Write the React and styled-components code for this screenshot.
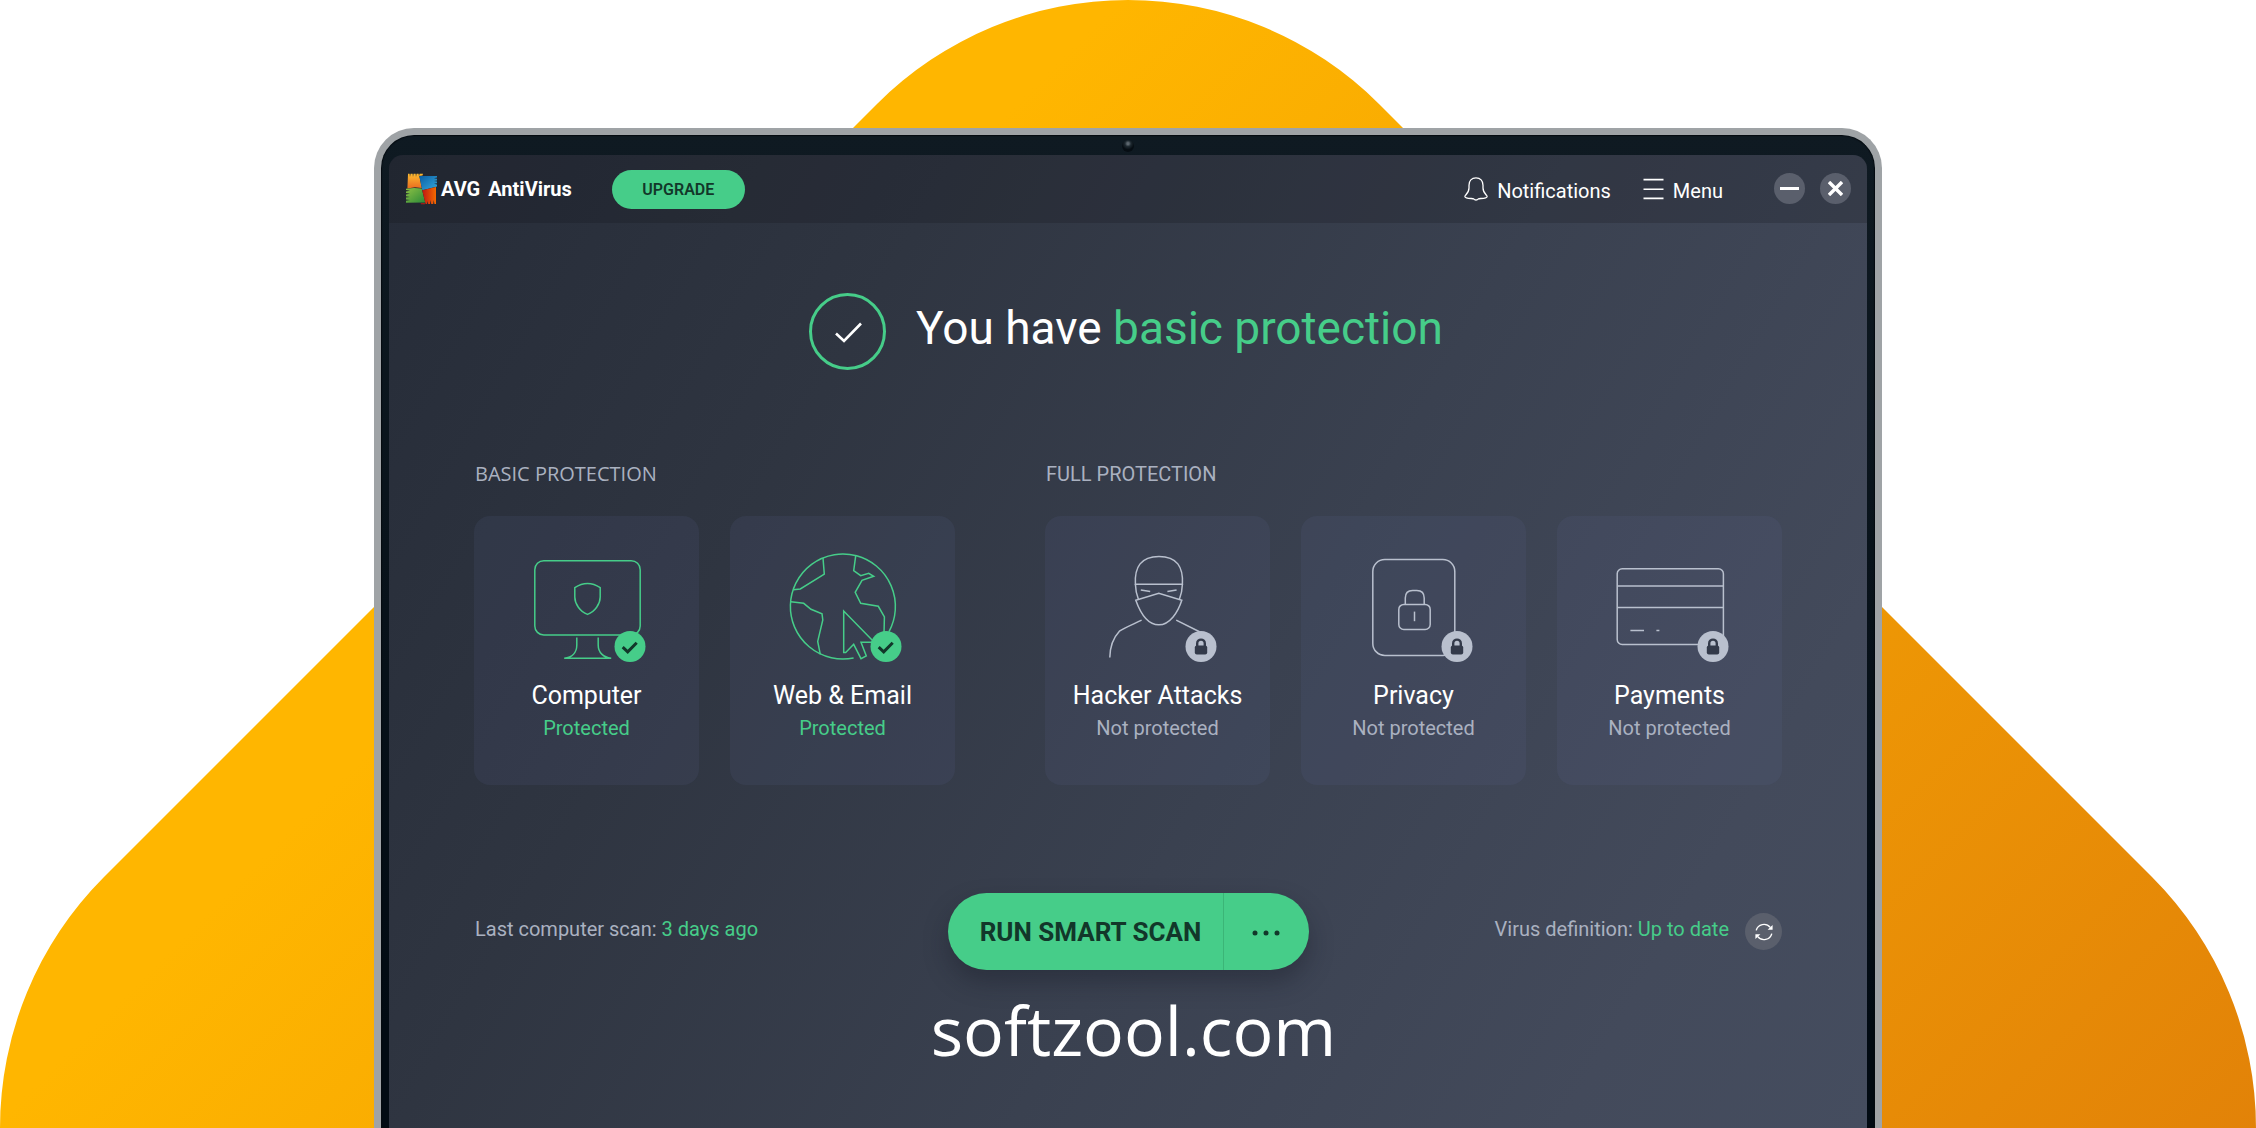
import styled, { createGlobalStyle, css } from "styled-components";

const GlobalStyle = createGlobalStyle`
  :root {
    --green: #46cd89;
    --dark-green: #12372a;
    --grey-text: #aab1c0;
    --badge-grey: #b9c0ce;
  }

  * {
    box-sizing: border-box;
  }

  body {
    margin: 0;
    background: #fff;
    font-family: Roboto, "Liberation Sans", sans-serif;
    color: #fff;
  }

  button {
    border: none;
    padding: 0;
    font-family: inherit;
    color: inherit;
    background: none;
    cursor: pointer;
  }
`;

const Page = styled.div`
  display: grid;
  min-height: 100vh;
  overflow: hidden;
`;

const Backdrop = styled.svg`
  grid-area: 1 / 1;
  display: block;
  width: 100%;
`;

const Laptop = styled.div`
  grid-area: 1 / 1;
  z-index: 1;
  justify-self: center;
  display: flex;
  flex-direction: column;
  width: 90%;
  max-width: 1508px;
  margin-top: 128px;
  border: 7px solid #9fa3a6;
  border-bottom: none;
  border-radius: 40px 40px 0 0;
  background: linear-gradient(#0f1a22, #020b13 90%);
  box-shadow: inset 0 0 1px 1px #050b10;
`;

const Bezel = styled.div`
  display: flex;
  justify-content: center;
  align-items: center;
  height: 20px;
  padding-top: 2px;
`;

const Camera = styled.span`
  width: 12px;
  height: 12px;
  border-radius: 50%;
  background: radial-gradient(circle at 50% 30%, #5c666e 0 1px, #1e2930 3px, #060d13 6px);
`;

const Screen = styled.div`
  flex: 1;
  margin: 0 8px;
  border-radius: 14px 14px 0 0;
  overflow: hidden;
  background: linear-gradient(120deg, #262c38 0%, #2f3541 28%, #3a4150 58%, #434a5b 85%, #454d5f 100%);
`;

const TopBar = styled.header`
  display: flex;
  align-items: center;
  height: 68px;
  padding: 0 16px;
  background: rgba(16, 14, 20, 0.2);
`;

const Brand = styled.div`
  display: flex;
  align-items: center;
  margin-left: 1px;
  font-size: 20px;
  font-weight: 700;
  line-height: 24px;
`;

const BrandName = styled.span`
  margin: 0 8px 0 2px;
`;

const UpgradeButton = styled.button`
  width: 133px;
  height: 39px;
  margin-left: 40px;
  border-radius: 20px;
  background: var(--green);
  color: var(--dark-green);
  font-size: 16px;
  font-weight: 600;
`;

const TopActions = styled.nav`
  display: flex;
  align-items: center;
  margin-left: auto;
`;

const TopLink = styled.button`
  display: flex;
  align-items: center;
  gap: 9px;
  margin-right: 32px;
  font-size: 20px;
  line-height: 24px;

  span {
    padding-top: 4px;
  }
`;

const WindowButtons = styled.div`
  display: flex;
  gap: 15px;
  margin-left: 19px;
  padding-bottom: 2px;
`;

const RoundButton = styled.button`
  display: flex;
  justify-content: center;
  align-items: center;
  width: ${(props) => props.$size}px;
  height: ${(props) => props.$size}px;
  border-radius: 50%;
  background: #5a5f6c;
`;

const Content = styled.main`
  display: flex;
  flex-direction: column;
  padding: 70px 85px 0;
`;

const Status = styled.div`
  display: flex;
  justify-content: center;
  align-items: center;
  gap: 30px;
`;

const StatusTitle = styled.h1`
  margin: 0;
  padding: 0 4px 8px 0;
  font-size: 46px;
  font-weight: 400;
  line-height: 56px;
`;

const Green = styled.span`
  color: var(--green);
`;

const Groups = styled.div`
  display: flex;
  justify-content: space-between;
  margin-top: 92px;
`;

const GroupTitle = styled.h2`
  margin: 0 0 30px 1px;
  color: var(--grey-text);
  font-size: 20px;
  font-weight: 400;
  line-height: 24px;
  ${(props) =>
    props.$humanist &&
    css`
      font-family: "Open Sans", "Noto Sans", sans-serif;
    `}
`;

const Cards = styled.div`
  display: flex;
  gap: 31px;
`;

const Card = styled.article`
  display: flex;
  flex-direction: column;
  align-items: center;
  width: 225px;
  padding: 30px 0 45px;
  border-radius: 16px;
  background: rgba(100, 108, 155, 0.12);
`;

const CardIcon = styled.svg`
  width: 120px;
  height: 120px;
  fill: none;
  stroke: ${(props) => (props.$safe ? "var(--green)" : "var(--badge-grey)")};
  stroke-width: 1.5;
`;

const CardTitle = styled.h3`
  margin: 14px 0 4px;
  font-size: 25px;
  font-weight: 400;
  line-height: 32px;
`;

const CardState = styled.p`
  margin: 0;
  color: ${(props) => (props.$safe ? "var(--green)" : "var(--grey-text)")};
  font-size: 20px;
  line-height: 24px;
`;

const ScanRow = styled.div`
  display: grid;
  grid-template-columns: 1fr auto 1fr;
  align-items: center;
  margin-top: 108px;
`;

const Info = styled.p`
  margin: 0 0 0 1px;
  padding-bottom: 6px;
  color: var(--grey-text);
  font-size: 20px;
  line-height: 24px;
`;

const Definition = styled.div`
  display: flex;
  justify-content: flex-end;
  align-items: center;
  gap: 16px;
`;

const ScanButtons = styled.div`
  display: flex;
  height: 77px;
  border-radius: 39px;
  overflow: hidden;
  background: var(--green);
  color: var(--dark-green);
  box-shadow: 0 12px 24px rgba(20, 22, 34, 0.35);
`;

const ScanButton = styled.button`
  width: 275px;
  padding-left: 11px;
  font-size: 26px;
  font-weight: 700;
`;

const MoreButton = styled.button`
  width: 86px;
  border-left: 1px solid #3bb577;
`;

const Site = styled.p`
  margin: 20px 0 0 11px;
  font-family: "Open Sans", "Noto Sans", sans-serif;
  font-size: 68px;
  line-height: 80px;
  text-align: center;
`;

function Logo() {
  return (
    <svg width="33" height="33" viewBox="0 0 33 33" aria-hidden="true">
      <defs>
        <linearGradient id="logoOrange" x1="0" y1="0" x2="0" y2="1">
          <stop offset="0" stopColor="#fdbb30" />
          <stop offset="1" stopColor="#ea6c20" />
        </linearGradient>
        <linearGradient id="logoBlue" x1="0" y1="0" x2="1" y2="1">
          <stop offset="0" stopColor="#0a5fa5" />
          <stop offset="1" stopColor="#35a7da" />
        </linearGradient>
        <linearGradient id="logoGreen" x1="0" y1="0" x2="1" y2="1">
          <stop offset="0" stopColor="#8cc044" />
          <stop offset="1" stopColor="#2b8a38" />
        </linearGradient>
        <linearGradient id="logoRed" x1="0" y1="0" x2="1" y2="0">
          <stop offset="0" stopColor="#b80d14" />
          <stop offset="1" stopColor="#f56a00" />
        </linearGradient>
      </defs>
      <path
        fill="url(#logoOrange)"
        d="M2 .7H3.6L4 4 4.6 .7H6.6L7 4 7.6 .7H9.6L10 4 10.6 .7H12.6L13 3.4 13.6 .7H17L16.5 2.6 13.3 3 15.8 15 9 14.2 1.4 15.4Z"
      />
      <path
        fill="url(#logoBlue)"
        d="M13.3 3H31V4.6L28 5.2 31 5.8V7.4L28 8 31 8.6V10.2L28 10.8 31 11.4V13.6L16.3 17.3Z"
      />
      <path
        fill="url(#logoGreen)"
        d="M0 15.8 8 15 15.7 15.4 19.2 29.4 0 29.7V27.8L4 27 0 26.4V24.6L4 24 0 23.2V21.4L4 20.8 0 20V18.4L4 17.8 0 17Z"
      />
      <path
        fill="url(#logoRed)"
        d="M16.3 17.3 30 14V31H28.4L27.8 27 27.2 31H25.2L24.6 27 24 31H22.2L21.6 28 21 31H19.6L19.2 29.4ZM14.6 30.2H19L18.6 31.2H15Z"
      />
    </svg>
  );
}

function SafeBadge() {
  return (
    <g stroke="none">
      <circle cx="103" cy="100.5" r="15.5" fill="#46cd89" />
      <path
        d="M95.7 101.2 100.7 105.8 109.7 96.8"
        fill="none"
        stroke="#12372a"
        strokeWidth="3"
      />
    </g>
  );
}

function LockBadge() {
  return (
    <g stroke="none">
      <circle cx="103" cy="100.5" r="15.5" fill="#b9c0ce" />
      <rect x="96.8" y="99.4" width="12.4" height="9" rx="2" fill="#333a4a" />
      <path
        d="M99.2 101V97.4a3.8 3.8 0 0 1 7.6 0V101"
        fill="none"
        stroke="#333a4a"
        strokeWidth="2.4"
      />
    </g>
  );
}

function ComputerDrawing() {
  return (
    <>
      <rect x="7.8" y="14.7" width="105.4" height="74.3" rx="9" />
      <path d="M47.8 41.6Q54 37.4 60.5 37.4T73.2 41.6V51C73.2 58 68 65.6 60.5 68.4 53 65.6 47.8 58 47.8 51Z" />
      <path d="M49.8 91.6V99C49.8 106.6 45 111.4 37.2 112.2H84.2C76.4 111.4 71.2 106.6 71.2 99V91.6" />
    </>
  );
}

function GlobeDrawing() {
  return (
    <>
      <path d="M70.6 111.9A52.5 52.5 0 1 1 106 85.6" />
      <path d="M40 12 41.3 28.2 17.3 43 10.3 43.8" />
      <path d="M7.8 55.8 20.7 57.3 28 63.3 39 67.7 39.8 74 34.7 95.4 37.3 108.4" />
      <path d="M72.7 9.8 70.7 24.7 77.7 29.7 85.7 27.3 90.7 30.3 79 34.3 72.2 46.3 77.7 57.3 95.3 60.3 101.4 71 101 88" />
      <path d="M92 97 60.7 65V106.6H62.7L70.7 98.3 78 112.7 83.3 110 78 96.2H92" />
    </>
  );
}

function HackerDrawing() {
  return (
    <>
      <path d="M37.4 38.2C36.4 21 43 10.4 61 10.4S85.4 21 84.4 38.2Z" />
      <path d="M37.4 38.2Q37.6 46 40.4 53.2M84.4 38.2Q84.2 46 81.4 53.2" />
      <path d="M37.8 54.2 60.8 47.4 83.8 54.2C80 66 72 78.8 60.8 78.8S42 66 37.8 54.2Z" />
      <path d="M42.8 44 52.2 45.6M78.6 44 69.4 45.6" />
      <path d="M43.6 74.2C36 78 28.6 80.6 21.4 85.2 15 92 12 100 11.8 111.6" />
      <path d="M78.2 74.2 102 86" />
    </>
  );
}

function PrivacyDrawing() {
  return (
    <>
      <rect x="18.8" y="13.4" width="82" height="96" rx="12" />
      <rect x="44.8" y="58.4" width="31.4" height="25" rx="5" />
      <path d="M51.3 58.4V52C51.3 47 54 44.4 58.6 44.4H62.8C67.4 44.4 70.2 47 70.2 52V58.4" />
      <path d="M60.5 65.6V75.2" />
    </>
  );
}

function PaymentsDrawing() {
  return (
    <>
      <rect x="7.2" y="22.8" width="106.2" height="75.6" rx="5" />
      <path d="M7.2 40H113.4M7.2 61.4H113.4M20.4 84.4H34M46.4 84.4H49.4" />
    </>
  );
}

const basicCards = [
  { title: "Computer", Drawing: ComputerDrawing },
  { title: "Web & Email", Drawing: GlobeDrawing },
];

const fullCards = [
  { title: "Hacker Attacks", Drawing: HackerDrawing },
  { title: "Privacy", Drawing: PrivacyDrawing },
  { title: "Payments", Drawing: PaymentsDrawing },
];

function ProtectionGroup({ title, cards, safe }) {
  return (
    <section>
      <GroupTitle $humanist={safe}>{title}</GroupTitle>
      <Cards>
        {cards.map(({ title, Drawing }) => (
          <Card key={title}>
            <CardIcon viewBox="0 0 120 120" $safe={safe} aria-hidden="true">
              <Drawing />
              {safe ? <SafeBadge /> : <LockBadge />}
            </CardIcon>
            <CardTitle>{title}</CardTitle>
            <CardState $safe={safe}>{safe ? "Protected" : "Not protected"}</CardState>
          </Card>
        ))}
      </Cards>
    </section>
  );
}

function Header() {
  return (
    <TopBar>
      <Brand>
        <Logo />
        <BrandName>AVG</BrandName>
        <span>AntiVirus</span>
      </Brand>
      <UpgradeButton>UPGRADE</UpgradeButton>
      <TopActions>
        <TopLink>
          <svg width="24" height="24" viewBox="0 0 24 24" fill="none" stroke="#fff" strokeWidth="1.3">
            <path d="M12 .8C7.6.8 5 4 5 8.2V11C5 14.4 3.6 16.2 1.6 18.2.4 19.6.8 20.4 2.4 20.8 5 21.6 8.6 21.4 9.6 21.8 10.8 23.4 13.2 23.4 14.4 21.8 15.4 21.4 19 21.6 21.6 20.8 23.2 20.4 23.6 19.6 22.4 18.2 20.4 16.2 19 14.4 19 11V8.2C19 4 16.4.8 12 .8Z" />
          </svg>
          <span>Notifications</span>
        </TopLink>
        <TopLink>
          <svg width="21" height="22" viewBox="0 0 21 22" stroke="#fff" strokeWidth="1.6">
            <path d="M.5 1.6H20.5M.5 11.2H20.5M.5 20.4H20.5" />
          </svg>
          <span>Menu</span>
        </TopLink>
        <WindowButtons>
          <RoundButton $size={31} aria-label="Minimize">
            <svg width="19" height="19" viewBox="0 0 19 19" stroke="#fff" strokeWidth="3">
              <path d="M0 9.5H19" />
            </svg>
          </RoundButton>
          <RoundButton $size={31} aria-label="Close">
            <svg width="15" height="15" viewBox="0 0 15 15" stroke="#fff" strokeWidth="3.4">
              <path d="M1 1 14 14M14 1 1 14" />
            </svg>
          </RoundButton>
        </WindowButtons>
      </TopActions>
    </TopBar>
  );
}

function App() {
  return (
    <Page>
      <GlobalStyle />
      <Backdrop viewBox="0 0 2256 1128" aria-hidden="true">
        <defs>
          <linearGradient id="sun" gradientUnits="userSpaceOnUse" x1="560" y1="560" x2="1700" y2="1700">
            <stop offset="0" stopColor="#ffb600" />
            <stop offset="1" stopColor="#e28208" />
          </linearGradient>
        </defs>
        <path
          fill="url(#sun)"
          d="M0 1128A355 355 0 0 1 104 877L877 104A355 355 0 0 1 1379 104L2152 877A355 355 0 0 1 2256 1128Z"
        />
      </Backdrop>
      <Laptop>
        <Bezel>
          <Camera />
        </Bezel>
        <Screen>
          <Header />
          <Content>
            <Status>
              <svg width="77" height="77" viewBox="0 0 77 77" fill="none" aria-hidden="true">
                <circle cx="38.5" cy="38.5" r="37" stroke="#46cd89" strokeWidth="3" />
                <path d="M27 40.5 35 48 52 30.5" stroke="#fff" strokeWidth="2.6" />
              </svg>
              <StatusTitle>
                You have <Green>basic protection</Green>
              </StatusTitle>
            </Status>
            <Groups>
              <ProtectionGroup title="BASIC PROTECTION" cards={basicCards} safe />
              <ProtectionGroup title="FULL PROTECTION" cards={fullCards} />
            </Groups>
            <ScanRow>
              <Info>
                Last computer scan: <Green>3 days ago</Green>
              </Info>
              <ScanButtons>
                <ScanButton>RUN SMART SCAN</ScanButton>
                <MoreButton aria-label="More scans">
                  <svg width="28" height="6" viewBox="0 0 28 6" fill="#12372a">
                    <circle cx="3" cy="3" r="2.5" />
                    <circle cx="14" cy="3" r="2.5" />
                    <circle cx="25" cy="3" r="2.5" />
                  </svg>
                </MoreButton>
              </ScanButtons>
              <Definition>
                <Info>
                  Virus definition: <Green>Up to date</Green>
                </Info>
                <RoundButton $size={37} aria-label="Update virus definition">
                  <svg width="18" height="18" viewBox="0 0 18 18" fill="none" stroke="#fff" strokeWidth="1.4">
                    <path d="M1.2 7.4A8 8 0 0 1 15.2 4.4M16.8 10.6A8 8 0 0 1 2.8 13.6" />
                    <path d="M17.6 2V6.8H12.6ZM.4 16V11.2H5.4Z" fill="#fff" stroke="none" />
                  </svg>
                </RoundButton>
              </Definition>
            </ScanRow>
            <Site>softzool.com</Site>
          </Content>
        </Screen>
      </Laptop>
    </Page>
  );
}

export default App;
